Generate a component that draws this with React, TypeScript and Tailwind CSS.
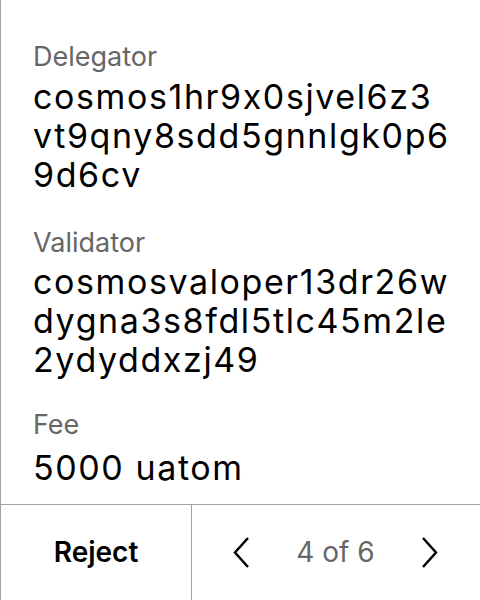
import React from "react";

const font = { fontFamily: "Inter, 'Noto Sans', sans-serif", fontFeatureSettings: "'calt' 0" };

function Field({ label, lines, valueGap, className }: { label: string; lines: string[]; valueGap: string; className?: string }) {
  return (
    <div className={"flex flex-col " + (className ?? "")}>
      <div className="text-[27px] leading-[34px] text-[#666666]">{label}</div>
      <div className={"text-[34px] leading-[39px] tracking-[1.6px] text-black " + valueGap}>
        {lines.map((l) => (
          <div key={l} className="whitespace-nowrap">{l}</div>
        ))}
      </div>
    </div>
  );
}

export default function App() {
  return (
    <div style={font} className="w-[480px] h-[600px] bg-white flex flex-col border-l border-[#a3a3a3]">
      <div className="flex-1 flex flex-col pl-[32px] pr-[16px] pt-[40px]">
        <Field
          label="Delegator"
          lines={["cosmos1hr9x0sjvel6z3", "vt9qny8sdd5gnnlgk0p6", "9d6cv"]}
          valueGap="mt-[3px]"
        />
        <Field
          className="mt-[32px]"
          label="Validator"
          lines={["cosmosvaloper13dr26w", "dygna3s8fdl5tlc45m2le", "2ydyddxzj49"]}
          valueGap="mt-[2px]"
        />
        <Field className="mt-[29px]" label="Fee" lines={["5000 uatom"]} valueGap="mt-[6px]" />
      </div>
      <div className="h-[96px] flex border-t border-[#a3a3a3]">
        <div className="w-[191px] flex items-center justify-center border-r border-[#a3a3a3] text-[28px] font-semibold text-black pb-[2px]">
          Reject
        </div>
        <div className="flex-1 flex items-center justify-between pl-[40px] pr-[41px] pb-[2px]">
          <svg width="18" height="32" viewBox="0 0 18 32" fill="none">
            <path d="M16 2 L3 16.5 L16 31" stroke="black" strokeWidth="2.5" />
          </svg>
          <span className="text-[28px] text-[#666666]">4 of 6</span>
          <svg width="18" height="32" viewBox="0 0 18 32" fill="none">
            <path d="M2 2 L15 16.5 L2 31" stroke="black" strokeWidth="2.5" />
          </svg>
        </div>
      </div>
    </div>
  );
}
